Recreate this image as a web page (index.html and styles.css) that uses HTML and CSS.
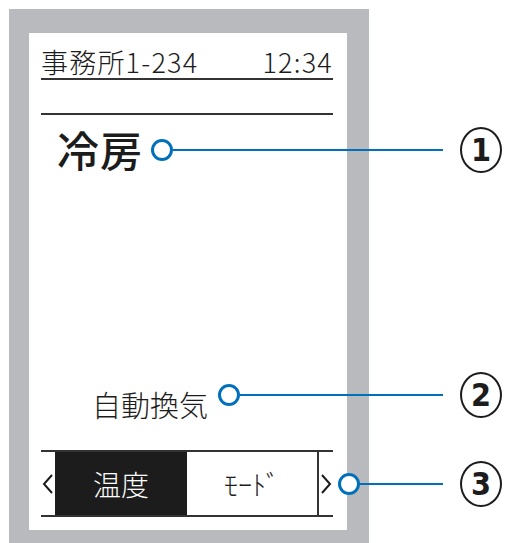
FILE: index.html
```html
<!DOCTYPE html>
<html lang="ja">
<head>
    <meta charset="UTF-8">
    <title>リモコン画面</title>
    <link rel="stylesheet" href="styles.css">
</head>
<body>
    <div class="page">
        <div class="frame">
            <div class="screen">
                <div class="header">
                    <span>事務所1-234</span>
                    <span>12:34</span>
                </div>
                <div class="rule"></div>
                <div class="mode">冷房</div>
                <div class="spacer"></div>
                <div class="status">自動換気</div>
                <div class="menu">
                    <span class="arrow">
                        <svg width="12" height="22" viewBox="0 0 12 22"><path d="M10 2 L2 11 L10 20" fill="none" stroke="#1c1c1c" stroke-width="2"/></svg>
                    </span>
                    <span class="tab active">温度</span>
                    <span class="tab">ﾓｰﾄﾞ</span>
                    <span class="arrow">
                        <svg width="12" height="22" viewBox="0 0 12 22"><path d="M2 2 L10 11 L2 20" fill="none" stroke="#1c1c1c" stroke-width="2"/></svg>
                    </span>
                </div>
            </div>
        </div>

        <!-- callouts -->
        <div class="callout c1"><span class="dot"></span><span class="lead"></span><span class="num">1</span></div>
        <div class="callout c2"><span class="dot"></span><span class="lead"></span><span class="num">2</span></div>
        <div class="callout c3"><span class="dot"></span><span class="lead"></span><span class="num">3</span></div>
    </div>
</body>
</html>
```

FILE: styles.css
```css
body {
    margin: 0;
    background: #ffffff;
    font-family: "Noto Sans CJK JP", "Noto Sans", sans-serif;
    color: #1c1c1c;
}

.page {
    position: relative;
    width: 506px;
    height: 543px;
    overflow: hidden;
}

.frame {
    margin: 9px 0 0 9px;
    width: 360px;
    height: 534px;
    box-sizing: border-box;
    padding: 24px 22px 13px 20px;
    background: #b9babd;
}

.screen {
    height: 100%;
    box-sizing: border-box;
    padding: 0 14px 0 12px;
    background: #ffffff;
    display: flex;
    flex-direction: column;
}

.header {
    display: flex;
    justify-content: space-between;
    margin-top: 13px;
    font-size: 27px;
    font-weight: 300;
    line-height: 32px;
    letter-spacing: 1.2px;
    border-bottom: 2px solid #333;
}

.rule {
    margin-top: 33px;
    border-top: 2px solid #333;
}

.mode {
    margin: 9px 0 0 16px;
    font-size: 42px;
    font-weight: 500;
    letter-spacing: 1px;
    line-height: 50px;
}

.spacer {
    flex: 1;
}

.status {
    margin-left: 51px;
    font-size: 29px;
    font-weight: 300;
    line-height: 36px;
}

.menu {
    display: flex;
    align-items: center;
    height: 63px;
    margin: 28px 0 13px;
    border-top: 2px solid #333;
    border-bottom: 2px solid #333;
}

.arrow {
    width: 14px;
    display: flex;
    justify-content: center;
}

.tab {
    align-self: stretch;
    display: flex;
    align-items: center;
    justify-content: center;
    width: 131px;
    font-size: 28px;
    font-weight: 300;
}

.tab.active {
    width: 133px;
    background: #1c1c1c;
    color: #ffffff;
}

.tab + .tab {
    border-right: 2px solid #333;
}

/* callouts */
.callout {
    position: absolute;
    right: 4px;
    display: flex;
    align-items: center;
    height: 44px;
}

.c1 { left: 151px; top: 128px; }
.c2 { left: 218px; top: 373px; }
.c3 { left: 338px; top: 462px; }

.dot {
    width: 16px;
    height: 16px;
    border: 3px solid #0070bd;
    border-radius: 50%;
    background: #ffffff;
}

.lead {
    flex: 1;
    height: 2px;
    background: #0070bd;
    margin-right: 17px;
}

.num {
    width: 38px;
    height: 42px;
    border: 2px solid #1c1c1c;
    border-radius: 50%;
    display: flex;
    align-items: center;
    justify-content: center;
    font-family: "DejaVu Sans", sans-serif;
    font-stretch: condensed;
    font-weight: bold;
    font-size: 32px;
}
```
